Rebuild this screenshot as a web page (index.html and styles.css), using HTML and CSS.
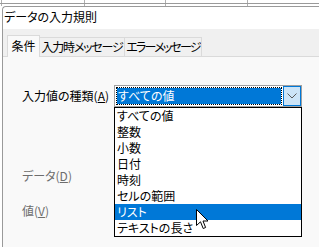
FILE: index.html
```html
<!DOCTYPE html>
<html lang="ja">
<head>
<meta charset="utf-8">
<link rel="stylesheet" href="styles.css">
</head>
<body>
<div class="sheet"></div>
<div class="dialog">
  <div class="titlebar">データの入力規則</div>
  <div class="tabstrip">
    <div class="tab active t1">条件</div>
    <div class="tab t2">入力時メッセージ</div>
    <div class="tab t3">エラーメッセージ</div>
  </div>
  <div class="panel">
    <div class="form">
      <div class="label">入力値の種類(<u>A</u>)</div>
      <div class="combo-wrap">
        <div class="combo">
          <div class="value">すべての値</div>
          <div class="button">
            <svg width="10" height="6" viewBox="0 0 10 6"><path d="M0.5 0.5 L5 5 L9.5 0.5" fill="none" stroke="#5a5a5a" stroke-width="1"/></svg>
          </div>
        </div>
        <ul class="list">
          <li>すべての値</li>
          <li>整数</li>
          <li>小数</li>
          <li>日付</li>
          <li>時刻</li>
          <li>セルの範囲</li>
          <li class="sel">リスト</li>
          <li>テキストの長さ</li>
        </ul>
      </div>
      <div class="label disabled row2">データ(<u>D</u>)</div>
      <div class="label disabled row3">値(<u>V</u>)</div>
    </div>
  </div>
</div>
<svg class="cursor" width="13" height="21" viewBox="0 0 13 21">
  <path d="M0.5 0.5 L0.5 16.5 L4.5 12.8 L7.2 19.5 L9.6 18.5 L7 12 L12 12 Z" fill="#fff" stroke="#000" stroke-width="1" stroke-linejoin="miter"/>
</svg>
</body>
</html>
```

FILE: styles.css
```css
html, body {
  margin: 0;
  padding: 0;
  width: 319px;
  height: 247px;
  overflow: hidden;
  background: #ffffff;
  font-family: "Noto Sans CJK JP", "Noto Sans", sans-serif;
  font-size: 12px;
  line-height: 16px;
  font-feature-settings: "palt";
  color: #000;
}
.sheet {
  height: 6px;
  background-color: #ffffff;
  background-image:
    linear-gradient(#9a9a9a, #9a9a9a),
    linear-gradient(#b0b0b0, #b0b0b0),
    linear-gradient(#b0b0b0, #b0b0b0),
    linear-gradient(#b0b0b0, #b0b0b0),
    linear-gradient(#b0b0b0, #b0b0b0);
  background-size: 100% 1px, 1px 100%, 1px 100%, 1px 100%, 1px 100%;
  background-position: 0 3px, 1px 0, 84px 0, 165px 0, 247px 0;
  background-repeat: no-repeat;
}
.dialog {
  margin-left: 2px;
  border-left: 1px solid #9a9a9a;
  border-top: 1px solid #9a9a9a;
  border-top-left-radius: 4px;
  background: #f9f9f9;
  height: 240px;
  overflow: hidden;
}
.titlebar {
  height: 22px;
  box-sizing: border-box;
  padding: 2px 0 0 1px;
  background: #ffffff;
  border-top-left-radius: 4px;
}
.tabstrip {
  height: 28px;
  box-sizing: border-box;
  background: #f0f0f0;
  display: flex;
  align-items: flex-end;
  padding-left: 4px;
  border-bottom: 1px solid #dadada;
}
.tab {
  height: 19px;
  box-sizing: border-box;
  padding-top: 1px;
  border: 1px solid #dadada;
  border-bottom: none;
  margin-left: -1px;
  background: #f0f0f0;
  white-space: nowrap;
  text-align: center;
  letter-spacing: -1.2px;
  overflow: hidden;
}
.tab.active {
  height: 22px;
  margin-bottom: -1px;
  padding-top: 2px;
  background: #f9f9f9;
  margin-left: 0;
  position: relative;
  z-index: 1;
  letter-spacing: 0;
}
.t1 { width: 33px; }
.t2 { width: 86px; }
.t3 { width: 78px; letter-spacing: -1.8px; }
.panel {
  padding: 28px 0 0 19px;
}
.form {
  display: grid;
  grid-template-columns: 92px 188px;
  grid-template-rows: 22px;
  align-items: center;
}
.label {
  white-space: nowrap;
}
.label.disabled {
  color: #6d6d6d;
}
.row2 {
  grid-column: 1;
  margin-top: 61px;
}
.row3 {
  grid-column: 1;
  margin-top: 19px;
}
.combo-wrap {
  position: relative;
  height: 22px;
}
.combo {
  height: 22px;
  box-sizing: border-box;
  border: 1px solid #a0a0a0;
  background: #ffffff;
  display: flex;
}
.value {
  flex: 1;
  margin: 1px;
  box-sizing: border-box;
  background: #0078d7;
  background-clip: padding-box;
  border: 1px dotted #000;
  color: #ffffff;
  padding-left: 1px;
  line-height: 16px;
}
.button {
  width: 18px;
  box-sizing: border-box;
  border: 1px solid #0078d7;
  background: #cce4f7;
  display: flex;
  align-items: center;
  justify-content: center;
}
.list {
  position: absolute;
  top: 22px;
  left: 0;
  width: 188px;
  box-sizing: border-box;
  margin: 0;
  padding: 0;
  list-style: none;
  border: 1px solid #000;
  background: #ffffff;
  z-index: 2;
}
.list li {
  height: 16px;
  line-height: 16px;
  padding-left: 2px;
  white-space: nowrap;
}
.list li.sel {
  background: #0078d7;
  color: #ffffff;
}
.cursor {
  position: absolute;
  left: 196px;
  top: 209px;
  z-index: 5;
}
```
